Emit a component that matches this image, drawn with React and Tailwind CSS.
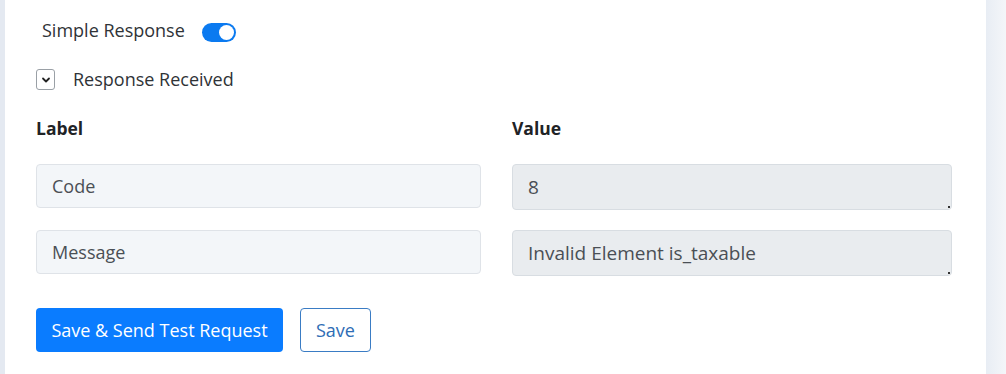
import React from 'react';

function Field({ value, variant }) {
  if (variant === 'value') {
    return (
      <div className="relative h-[46px] rounded-[4px] border border-[#d8dde2] bg-[#e9ecef] pl-[15px] flex items-center text-[19px] text-[#4a4f55]">
        {value}
        <span className="absolute bottom-[1px] right-[1px] h-[2px] w-[2px] bg-[#333]" />
      </div>
    );
  }
  return (
    <div className="h-[44px] rounded-[4px] border border-[#dfe3e8] bg-[#f3f6f9] pl-[15px] flex items-center text-[18px] text-[#4a4f55]">
      {value}
    </div>
  );
}

export default function App() {
  return (
    <div className="flex h-[374px] w-[1006px] bg-white" style={{ fontFamily: '"Open Sans", Lato, sans-serif' }}>
      <div className="w-[5px] bg-[#e4e9f1]" />
      <div className="flex-1 pl-[31px] pr-[34px]">
        <div className="flex items-center h-[20px] mt-[20px] pl-[6px]">
          <span className="text-[18px] text-[#2f3337]">Simple Response</span>
          <div className="ml-[17px] mt-[4px] flex h-[19px] w-[34px] items-center justify-end rounded-full bg-[#0b7af0] pr-[2px]">
            <div className="h-[15px] w-[15px] rounded-full bg-white" />
          </div>
        </div>
        <div className="flex items-center mt-[26px]">
          <div className="flex h-[21px] w-[19px] items-center justify-center rounded-[3px] border border-[#9aa0a6] bg-white">
            <svg width="10" height="10" viewBox="0 0 10 10" fill="none">
              <path d="M2 3.5 L5 6.5 L8 3.5" stroke="#222" strokeWidth="1.8" strokeLinecap="round" strokeLinejoin="round" />
            </svg>
          </div>
          <span className="ml-[18px] text-[18px] text-[#2f3337]">Response Received</span>
        </div>
        <div className="grid grid-cols-[445px_440px] gap-x-[31px] mt-[23px]">
          <div className="text-[17.5px] font-bold text-[#1f2326] h-[24px] leading-[24px]">Label</div>
          <div className="text-[17.5px] font-bold text-[#1f2326] h-[24px] leading-[24px]">Value</div>
          <div className="mt-[24px]"><Field value="Code" /></div>
          <div className="mt-[24px]"><Field value="8" variant="value" /></div>
          <div className="mt-[20px]"><Field value="Message" /></div>
          <div className="mt-[20px]"><Field value="Invalid Element is_taxable" variant="value" /></div>
        </div>
        <div className="flex items-center gap-[17px] mt-[32px]">
          <button className="h-[44px] w-[247px] rounded-[4px] bg-[#0a7cff] text-[18px] text-white">Save &amp; Send Test Request</button>
          <button className="h-[44px] w-[71px] rounded-[4px] border border-[#3a7cc4] bg-white text-[18px] text-[#2e6db5]">Save</button>
        </div>
      </div>
      <div className="w-[20px] bg-gradient-to-r from-[#e8edf4] to-[#f4f6f9]" />
    </div>
  );
}
